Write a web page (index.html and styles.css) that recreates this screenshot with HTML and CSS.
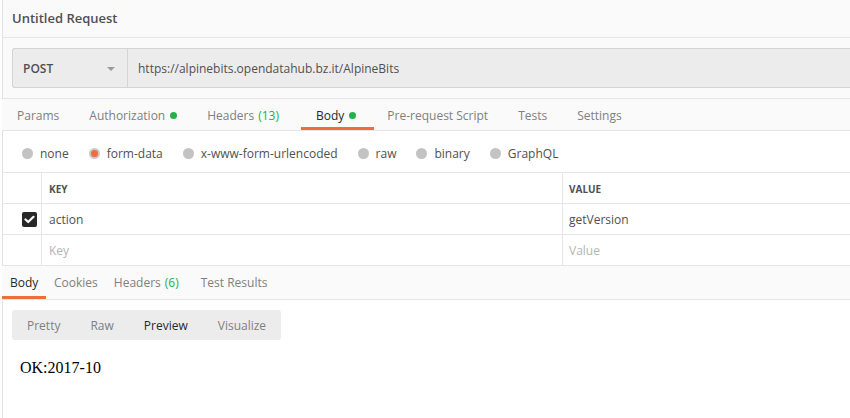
FILE: index.html
```html
<!DOCTYPE html>
<html>
<head>
<meta charset="utf-8">
<link rel="stylesheet" href="styles.css">
</head>
<body>
<div class="app">
  <div class="title-bar">Untitled Request</div>
  <div class="url-row">
    <div class="url-box">
      <div class="method">POST <span class="caret"></span></div>
      <div class="url">https://alpinebits.opendatahub.bz.it/AlpineBits</div>
    </div>
  </div>
  <div class="tabs">
    <div class="tab">Params</div>
    <div class="tab">Authorization <span class="dot"></span></div>
    <div class="tab">Headers <span class="count">(13)</span></div>
    <div class="tab active">Body <span class="dot"></span></div>
    <div class="tab">Pre-request Script</div>
    <div class="tab">Tests</div>
    <div class="tab">Settings</div>
  </div>
  <div class="radios">
    <div class="radio"><span class="circle"></span>none</div>
    <div class="radio"><span class="circle on"></span>form-data</div>
    <div class="radio"><span class="circle"></span>x-www-form-urlencoded</div>
    <div class="radio"><span class="circle"></span>raw</div>
    <div class="radio"><span class="circle"></span>binary</div>
    <div class="radio"><span class="circle"></span>GraphQL</div>
  </div>
  <div class="table">
    <div class="row head">
      <div class="c0"></div>
      <div class="c1">KEY</div>
      <div class="c2">VALUE</div>
    </div>
    <div class="row">
      <div class="c0"><span class="check"><svg width="11" height="9" viewBox="0 0 11 9"><path d="M1.5 4.5 L4.2 7 L9.5 1.8" fill="none" stroke="#fff" stroke-width="2.2" stroke-linecap="round" stroke-linejoin="round"/></svg></span></div>
      <div class="c1">action</div>
      <div class="c2">getVersion</div>
    </div>
    <div class="row">
      <div class="c0"></div>
      <div class="c1 ph">Key</div>
      <div class="c2 ph">Value</div>
    </div>
  </div>
  <div class="rtabs">
    <div class="rtab active">Body</div>
    <div class="rtab">Cookies</div>
    <div class="rtab">Headers <span class="count">(6)</span></div>
    <div class="rtab">Test Results</div>
  </div>
  <div class="resp">
    <div class="seg">
      <div class="segbtn">Pretty</div>
      <div class="segbtn">Raw</div>
      <div class="segbtn sel">Preview</div>
      <div class="segbtn">Visualize</div>
    </div>
    <div class="preview">OK:2017-10</div>
  </div>
</div>
</body>
</html>
```

FILE: styles.css
```css
* { box-sizing: border-box; }
html, body { margin: 0; padding: 0; }
body {
  width: 850px;
  height: 418px;
  overflow: hidden;
  background: #fff;
  font-family: "Open Sans", "Noto Sans", sans-serif;
  color: #505050;
  padding-left: 2px;
}
.app {
  border-left: 1px solid #e2e2e2;
  height: 418px;
  background: #fff;
}
.title-bar {
  height: 38px;
  background: #fafafa;
  border-bottom: 1px solid #e6e6e6;
  padding: 8px 0 0 9px;
  font-size: 13px;
  font-weight: 600;
  color: #505050;
  line-height: 20px;
}
.url-row {
  background: #fafafa;
  padding: 10px 0 10px 9px;
  border-bottom: 1px solid #e6e6e6;
  height: 61px;
}
.url-box {
  display: flex;
  height: 40px;
  background: #ececec;
  border: 1px solid #d4d4d4;
  border-right: none;
  border-radius: 3px 0 0 3px;
  padding-top: 1px;
}
.method {
  width: 115px;
  border-right: 1px solid #d4d4d4;
  margin-top: -1px;
  padding: 1px 12px 0 10px;
  display: flex;
  align-items: center;
  justify-content: space-between;
  font-size: 12px;
  font-weight: 600;
  color: #505050;
}
.caret {
  width: 0;
  height: 0;
  border-left: 4px solid transparent;
  border-right: 4px solid transparent;
  border-top: 4px solid #9a9a9a;
}
.url {
  display: flex;
  align-items: center;
  padding-left: 10px;
  font-size: 12px;
  color: #505050;
}
.tabs {
  display: flex;
  height: 32px;
  background: #fafafa;
  border-bottom: 1px solid #e6e6e6;
  margin-left: -1px;
}
.tab {
  padding: 1px 15px 0 15px;
  font-size: 12px;
  color: #808080;
  display: flex;
  align-items: center;
  height: 31px;
}
.tab.active {
  color: #282828;
  border-bottom: 3px solid #f26b3a;
  padding: 4px 18px 0 15px;
  margin-left: 7px;
  margin-right: -2px;
}
.dot {
  display: inline-block;
  width: 7px;
  height: 7px;
  border-radius: 50%;
  background: #26b047;
  margin-left: 5px;
}
.count { color: #26b047; margin-left: 4px; }
.radios {
  display: flex;
  align-items: center;
  height: 42px;
  padding: 3px 0 0 19px;
  background: #fff;
  border-bottom: 1px solid #e6e6e6;
}
.radio {
  display: flex;
  align-items: center;
  font-size: 12px;
  color: #505050;
  margin-right: 20px;
}
.circle {
  width: 11px;
  height: 11px;
  border-radius: 50%;
  background: #c3c3c3;
  margin-right: 7px;
}
.circle.on {
  background: #f26b3a;
  border: 2px solid #c9c9c9;
}
.table { background: #fff; }
.row {
  display: flex;
  height: 31px;
  border-bottom: 1px solid #e6e6e6;
}
.row.head { padding-top: 1px; }
.row.head .c0 { margin-top: -1px; }
.c0 {
  width: 39px;
  border-right: 1px solid #e6e6e6;
  display: flex;
  align-items: center;
  justify-content: flex-end;
  padding-right: 4px;
}
.c1 {
  width: 521px;
  border-right: 1px solid #e6e6e6;
  display: flex;
  align-items: center;
  padding-left: 7px;
  font-size: 12px;
  color: #505050;
}
.c2 {
  flex: 1;
  display: flex;
  align-items: center;
  padding-left: 6px;
  font-size: 12px;
  color: #505050;
}
.head .c1, .head .c2 {
  font-size: 10px;
  font-weight: 700;
  color: #505050;
}
.ph { color: #b4b4b4; }
.check {
  width: 15px;
  height: 15px;
  border-radius: 2px;
  background: #282828;
  display: flex;
  align-items: center;
  justify-content: center;
}
.rtabs {
  display: flex;
  height: 34px;
  background: #fafafa;
  border-bottom: 1px solid #e6e6e6;
  margin-left: -1px;
}
.rtab {
  font-size: 12px;
  color: #808080;
  padding: 0 8px;
  display: flex;
  align-items: center;
  height: 33px;
}
.rtab.active {
  color: #282828;
  border-bottom: 3px solid #f26b3a;
  padding: 3px 7px 0 8px;
  width: 44px;
  justify-content: flex-start;
}
.rtab:nth-child(4) { margin-left: 6px; }
.resp {
  padding: 10px 0 0 9px;
  background: #fff;
}
.seg {
  display: flex;
  width: 269px;
  height: 30px;
  background: #ececec;
  border-radius: 3px;
  align-items: center;
}
.segbtn {
  font-size: 12px;
  color: #808080;
  padding: 0 15px;
}
.segbtn.sel { color: #282828; }
.preview {
  font-family: "Liberation Serif", "Times New Roman", serif;
  font-size: 16px;
  color: #000;
  margin-top: 19px;
  padding-left: 8px;
}
```
